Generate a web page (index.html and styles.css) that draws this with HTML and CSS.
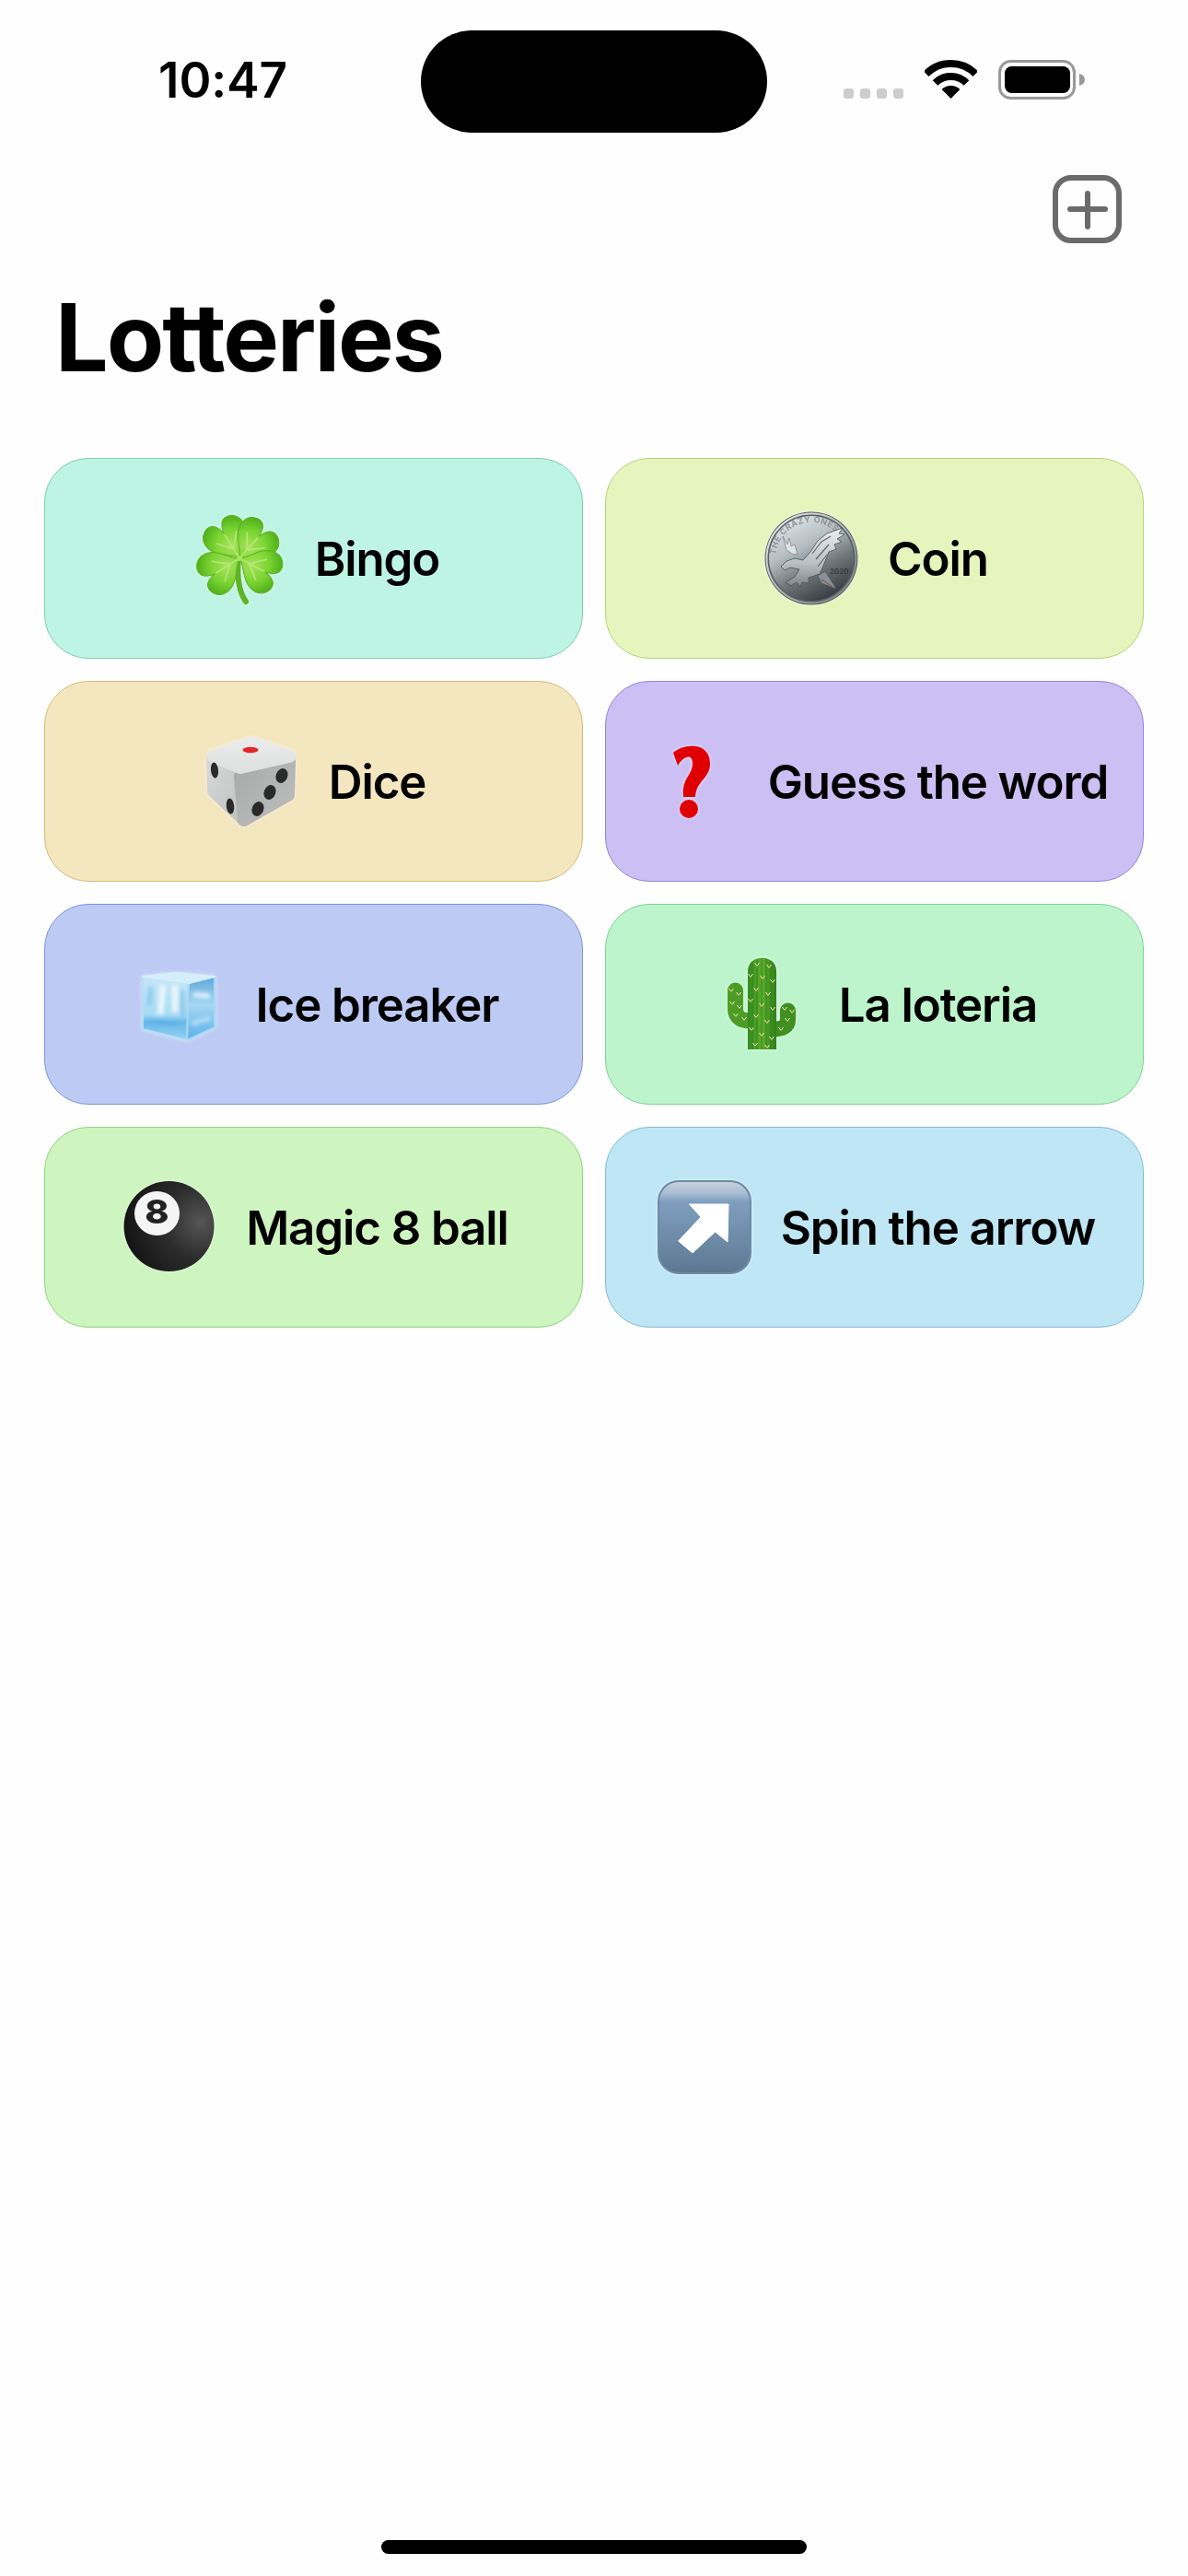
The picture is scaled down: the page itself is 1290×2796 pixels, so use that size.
FILE: index.html
```html
<!DOCTYPE html>
<html lang="en">
<head>
<meta charset="utf-8">
<title>Lotteries</title>
<link rel="stylesheet" href="styles.css">
</head>
<body>
<div class="phone">
  <header class="status">
    <div class="time">10:47</div>
    <div class="island"></div>
    <div class="indicators">
      <div class="signal"><i></i><i></i><i></i><i></i></div>
      <svg class="wifi" viewBox="0 0 57 42"><g fill="none" stroke="#000" stroke-width="8"><path d="M1.63 15.13A38 38 0 0 1 55.37 15.13"/><path d="M11.53 25.03A24 24 0 0 1 45.47 25.03"/></g><path d="M28.5 42L18.6 32.1A14 14 0 0 1 38.4 32.1Z"/></svg>
      <svg class="battery" viewBox="0 0 94 43"><rect x="1.5" y="1.5" width="81" height="40" rx="12" fill="none" stroke="#999" stroke-width="3"/><rect x="7" y="7" width="71" height="29" rx="7.5"/><path d="M88 15C92 16 94 18.500 94 21.500S92 27 88 28Z" fill="#999"/></svg>
    </div>
  </header>

  <div class="nav">
    <svg class="add" viewBox="0 0 75 75"><rect x="3" y="3" width="69" height="68" rx="17" fill="none" stroke="#6b6b6b" stroke-width="6"/><path d="M38 20V56M19 37H57" stroke="#6b6b6b" stroke-width="6" stroke-linecap="round"/></svg>
  </div>

  <h1 class="title">Lotteries</h1>

  <main class="grid">
    <a class="card mint">
      <svg class="emoji" viewBox="0 0 102 102">
        <defs>
          <radialGradient id="leaf" cx="50%" cy="65%" r="70%"><stop offset="0" stop-color="#a8e35a"/><stop offset=".55" stop-color="#7bd432"/><stop offset="1" stop-color="#4fb01a"/></radialGradient>
          <g id="heart"><path d="M0 0C-3-8-24-15-24-32C-24-42-14-48-7-45C-3-43-1-38 0-32C1-38 3-43 7-45C14-48 24-42 24-32C24-15 3-8 0 0Z" fill="url(#leaf)" stroke="#5cb324" stroke-width="1"/><path d="M0-3V-30M0-12L-13-27M0-12L13-27" stroke="#bdea85" stroke-width="1.800" fill="none" opacity=".75"/></g>
        </defs>
        <path d="M51 52C49 72 52 88 59 98" fill="none" stroke="#5fb322" stroke-width="6" stroke-linecap="round"/>
        <use href="#heart" transform="translate(52 51) rotate(-32)"/>
        <use href="#heart" transform="translate(52 51) rotate(42)"/>
        <use href="#heart" transform="translate(52 51) rotate(118)"/>
        <use href="#heart" transform="translate(52 51) rotate(-122)"/>
        <circle cx="52" cy="51" r="3" fill="#a8e35a"/>
      </svg>
      <span>Bingo</span>
    </a>

    <a class="card lime">
      <svg class="emoji" viewBox="0 0 102 102">
        <defs>
          <linearGradient id="coin" x1=".2" y1=".05" x2=".7" y2="1"><stop offset="0" stop-color="#dfe4e6"/><stop offset=".35" stop-color="#b3bcc0"/><stop offset=".65" stop-color="#6d7579"/><stop offset="1" stop-color="#33383b"/></linearGradient>
          <linearGradient id="rim" x1="0" y1="0" x2="1" y2="1"><stop offset="0" stop-color="#f1f3f3"/><stop offset="1" stop-color="#6d7578"/></linearGradient>
          <linearGradient id="eagle" x1="0" y1="0" x2="0" y2="1"><stop offset="0" stop-color="#eef0f0"/><stop offset=".6" stop-color="#b9c0c3"/><stop offset="1" stop-color="#7c8488"/></linearGradient>
          <path id="coinarc" d="M12 51A39 39 0 0 1 90 51"/>
        </defs>
        <circle cx="51" cy="51" r="50.500" fill="#585e62"/>
        <circle cx="51" cy="51" r="48.500" fill="none" stroke="url(#rim)" stroke-width="2"/>
        <circle cx="51" cy="51" r="46" fill="url(#coin)"/>
        <text class="coin-arc"><textPath href="#coinarc" startOffset="4">THE CRAZY ONES</textPath></text>
        <text class="coin-year" x="71" y="68">2020</text>
        <path d="M20 27L24 42L30 46L36 47L33 36L29 38L27 29L25 36Z" fill="#dfe3e5" stroke="#6a7175" stroke-width=".6"/>
        <path d="M18 60L24 54L33 51L42 53L50 44L58 32L68 24L85 18L81 24L87 25L79 30L84 33L76 36L78 41L70 44L66 54L62 64L60 68L48 72L48 78L41 77L39 82L35 77L29 81L23 77L33 71L38 63L28 61L22 64Z" fill="url(#eagle)" stroke="#4b5154" stroke-width=".8"/>
        <path d="M58 70L66 65L78 84L62 78Z" fill="#8a9094" stroke="#4b5154" stroke-width=".6"/>
        <path d="M52 46L62 33L72 27M56 52L70 36M58 60L68 47" stroke="#626a6e" stroke-width="1.200" fill="none"/>
        <path d="M62 74L74 82" stroke="#8c5a56" stroke-width="1.500" fill="none"/>
      </svg>
      <span>Coin</span>
    </a>

    <a class="card sand">
      <svg class="emoji" viewBox="0 0 102 102">
        <defs>
          <linearGradient id="dl" x1="0" y1="0" x2="1" y2="1"><stop offset="0" stop-color="#d6d7d7"/><stop offset="1" stop-color="#bfc0c0"/></linearGradient>
          <linearGradient id="dr" x1="0" y1="0" x2="1" y2="1"><stop offset="0" stop-color="#a9aaaa"/><stop offset="1" stop-color="#bcbdbd"/></linearGradient>
          <linearGradient id="dt" x1="0" y1="0" x2="0" y2="1"><stop offset="0" stop-color="#e9eaea"/><stop offset="1" stop-color="#dfe0e0"/></linearGradient>
        </defs>
        <g stroke-linejoin="round" stroke-width="14">
          <path d="M8 26L38 44L42 93L9 62Z" fill="url(#dl)" stroke="url(#dl)"/>
          <path d="M38 46L91 30L90 66L42 93Z" fill="url(#dr)" stroke="url(#dr)"/>
          <path d="M9 24L50 9L91 24L38 36Z" fill="url(#dt)" stroke="url(#dt)"/>
        </g>
        <ellipse cx="49" cy="17" rx="8.500" ry="3.200" fill="#e2262a"/>
        <g fill="#2a2a2a">
          <ellipse cx="10" cy="39" rx="4" ry="8.500" transform="rotate(-6 10 39)"/>
          <ellipse cx="27" cy="78" rx="4.200" ry="8.500" transform="rotate(-6 27 78)"/>
          <ellipse cx="83" cy="45" rx="6.300" ry="8.200" transform="rotate(22 83 45)"/>
          <ellipse cx="70" cy="63" rx="6.300" ry="8.200" transform="rotate(22 70 63)"/>
          <ellipse cx="57" cy="81" rx="6.300" ry="8.200" transform="rotate(22 57 81)"/>
        </g>
      </svg>
      <span>Dice</span>
    </a>

    <a class="card violet">
      <svg class="emoji" viewBox="0 0 102 102">
        <path d="M31 20C40 11 71 6 71 32C71 48 56 50 55 68L42 68C40 48 52 44 52 32C52 20 42 24 36 34Z" fill="#e00000"/>
        <circle cx="48" cy="81" r="10" fill="#e00000"/>
      </svg>
      <span>Guess the word</span>
    </a>

    <a class="card periwinkle">
      <svg class="emoji" viewBox="0 0 102 102">
        <defs>
          <linearGradient id="il" x1="0" y1="0" x2="0" y2="1"><stop offset="0" stop-color="#c6e6f8"/><stop offset=".6" stop-color="#a6daf5"/><stop offset=".72" stop-color="#67b7ea"/><stop offset="1" stop-color="#97d2f2"/></linearGradient>
          <linearGradient id="ir" x1="0" y1="0" x2="0" y2="1"><stop offset="0" stop-color="#5ea9dc"/><stop offset=".45" stop-color="#a5d6f2"/><stop offset=".7" stop-color="#7fc5ee"/><stop offset="1" stop-color="#5fb0e6"/></linearGradient>
          <filter id="soft" x="-20%" y="-20%" width="140%" height="140%"><feGaussianBlur stdDeviation="2.200"/></filter>
        </defs>
        <path d="M11 21L61 28L59 90L11 78Z" fill="url(#il)" stroke="#b3dff6" stroke-linejoin="round" stroke-width="2"/>
        <path d="M61 28L89 21L89 76L59 90Z" fill="url(#ir)" stroke="#a6d8f3" stroke-linejoin="round" stroke-width="2"/>
        <path d="M11 21L47 17L89 21L61 28Z" fill="#d5eefb" stroke="#d5eefb" stroke-linejoin="round" stroke-width="2"/>
        <g filter="url(#soft)" fill="none">
          <path d="M33 30L30 62M46 30L46 60" stroke="#f6fcff" stroke-width="7" opacity=".85"/>
          <path d="M20 32L18 52M54 36L54 64" stroke="#6fb8e6" stroke-width="4" opacity=".65"/>
          <path d="M16 68C26 72 36 68 48 74" stroke="#4fa6e0" stroke-width="3" opacity=".6"/>
          <path d="M66 42C72 38 78 44 84 41" stroke="#eef9ff" stroke-width="6" opacity=".8"/>
          <path d="M64 72L84 66" stroke="#cdeafa" stroke-width="4" opacity=".8"/>
        </g>
      </svg>
      <span>Ice breaker</span>
    </a>

    <a class="card green">
      <svg class="emoji" viewBox="0 0 102 102">
        <defs>
          <linearGradient id="cac" x1="0" y1="0" x2="1" y2="0"><stop offset="0" stop-color="#338a1e"/><stop offset=".5" stop-color="#5cae2c"/><stop offset="1" stop-color="#2f7f1a"/></linearGradient>
          <g id="sp"><path d="M-2.500-2L0 1.500L2.500-2" stroke="#efe7bd" stroke-width="1" fill="none"/><circle r=".8" cy="1.500" fill="#c8824a"/></g>
        </defs>
        <path d="M21.500 36V56Q21.500 69 38 69" fill="none" stroke="#4b9d26" stroke-width="17" stroke-linecap="round"/>
        <path d="M78.500 58V68Q78.500 78 62 78" fill="none" stroke="#3f9020" stroke-width="17" stroke-linecap="round"/>
        <path d="M35 15C35-4 66-4 66 15V100H35Z" fill="url(#cac)"/>
        <path d="M40 6V100M45 2V100M50 1V100M55 1V100M60 4V100" stroke="#2f7f1a" stroke-width=".8" fill="none"/>
        <g>
          <use href="#sp" x="45" y="8"/><use href="#sp" x="58" y="10"/><use href="#sp" x="38" y="20"/><use href="#sp" x="51" y="22"/><use href="#sp" x="62" y="26"/><use href="#sp" x="44" y="35"/><use href="#sp" x="57" y="40"/><use href="#sp" x="38" y="47"/><use href="#sp" x="50" y="52"/><use href="#sp" x="62" y="56"/><use href="#sp" x="44" y="64"/><use href="#sp" x="56" y="70"/><use href="#sp" x="39" y="78"/><use href="#sp" x="50" y="84"/><use href="#sp" x="61" y="88"/><use href="#sp" x="43" y="95"/><use href="#sp" x="56" y="97"/>
          <use href="#sp" x="17" y="36"/><use href="#sp" x="25" y="40"/><use href="#sp" x="18" y="50"/><use href="#sp" x="26" y="54"/><use href="#sp" x="22" y="63"/><use href="#sp" x="31" y="67"/>
          <use href="#sp" x="75" y="56"/><use href="#sp" x="83" y="59"/><use href="#sp" x="78" y="68"/><use href="#sp" x="71" y="78"/>
        </g>
      </svg>
      <span>La loteria</span>
    </a>

    <a class="card leaf">
      <svg class="emoji" viewBox="0 0 102 102">
        <defs>
          <radialGradient id="ball" cx=".85" cy=".45" r=".9"><stop offset="0" stop-color="#555"/><stop offset=".45" stop-color="#2c2c2c"/><stop offset="1" stop-color="#111"/></radialGradient>
        </defs>
        <circle cx="50.500" cy="50" r="49" fill="url(#ball)"/>
        <ellipse cx="37.500" cy="36" rx="24.500" ry="24" fill="#f5f5f5"/>
        <text class="eight" x="34" y="47.500" transform="scale(1.100 1)">8</text>
      </svg>
      <span>Magic 8 ball</span>
    </a>

    <a class="card sky">
      <svg class="emoji" viewBox="0 0 102 102">
        <defs>
          <linearGradient id="key" x1="0" y1="0" x2="0" y2="1"><stop offset="0" stop-color="#c9d3e0"/><stop offset=".13" stop-color="#a9bdd2"/><stop offset=".22" stop-color="#7f9fc0"/><stop offset="1" stop-color="#5d7791"/></linearGradient>
        </defs>
        <rect x="1" y="1" width="100" height="100" rx="22" fill="url(#key)" stroke="#6f8aa5" stroke-width="2"/>
        <path d="M77 26H34.500L47 40L22.600 66L38 79L62.600 56L76 67Z" fill="#fff" stroke="#fff" stroke-linejoin="round" stroke-width="1"/>
      </svg>
      <span>Spin the arrow</span>
    </a>
  </main>

  <div class="home"></div>
</div>
</body>
</html>
```

FILE: styles.css
```css
* { box-sizing: border-box; }

html, body { margin: 0; padding: 0; }

body {
  background: #fefefe;
  font-family: Inter, "Liberation Sans", sans-serif;
  color: #000;
  font-variant-ligatures: none;
  font-feature-settings: "calt" 0;
}

.phone {
  width: 1290px;
  height: 2796px;
  display: flex;
  flex-direction: column;
}

.status {
  display: grid;
  grid-template-columns: 457px 376px 1fr;
  padding-top: 33px;
}

.time {
  padding: 24px 0 0 172px;
  font-size: 53px;
  font-weight: 600;
  line-height: 60px;
  letter-spacing: 0;
}

.island {
  height: 111px;
  border-radius: 56px;
  background: #000;
}

.indicators {
  display: flex;
  align-items: flex-end;
  height: 43px;
  margin-top: 32px;
  padding-left: 83px;
}

.signal {
  display: flex;
  gap: 7px;
  margin-right: 23px;
  margin-bottom: 1px;
}

.signal i {
  width: 11px;
  height: 11px;
  border-radius: 3px;
  background: #cdcdcd;
}

.wifi { width: 57px; height: 42px; margin-right: 23px; margin-bottom: 1px; }
.battery { width: 94px; height: 43px; }

.nav {
  display: flex;
  justify-content: flex-end;
  padding: 46px 72px 0 0;
}

.add { width: 75px; height: 75px; }

.title {
  margin: 39px 0 0 60px;
  font-size: 102px;
  font-weight: 700;
  line-height: 124px;
  letter-spacing: -2px;
}

.grid {
  display: grid;
  grid-template-columns: 585px 585px;
  grid-auto-rows: 218px;
  gap: 24px;
  padding: 0 48px;
  margin-top: 69px;
}

.card {
  display: flex;
  align-items: center;
  justify-content: center;
  gap: 32px;
  padding-left: 4px;
  border: 1.5px solid;
  border-radius: 48px;
  font-size: 51px;
  font-weight: 600;
  letter-spacing: -1.1px;
}

.emoji {
  flex: none;
  width: 102px;
  height: 102px;
  overflow: visible;
  filter: drop-shadow(0 0 2px rgba(255, 255, 255, .55));
}

.mint { background: #bef4e3; border-color: #7dcfb3; }
.lime { background: #e6f4bd; border-color: #bcd177; }
.sand { background: #f4e6bf; border-color: #d3bd78; }
.violet { background: #cbbff3; border-color: #9486d6; }
.periwinkle { background: #bdcbf4; border-color: #7f93d8; }
.green { background: #bdf4cc; border-color: #7fd19a; }
.leaf { background: #cef4bf; border-color: #8fd47f; }
.sky { background: #bee6f4; border-color: #7fbdd6; }

.coin-arc { font-size: 9px; font-weight: 700; fill: #8d9599; letter-spacing: .5px; }
.coin-year { font-size: 8px; font-weight: 600; fill: #33383b; letter-spacing: 0; }
.eight { font-size: 36px; font-weight: 800; text-anchor: middle; fill: #222; letter-spacing: 0; }

.home {
  width: 462px;
  height: 15px;
  margin: auto auto 24px;
  border-radius: 8px;
  background: #000;
}
```
